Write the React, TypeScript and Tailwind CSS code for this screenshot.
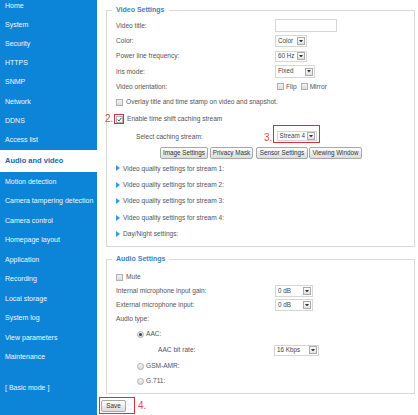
import { ReactNode } from 'react';

const menuTop = ['Home', 'System', 'Security', 'HTTPS', 'SNMP', 'Network', 'DDNS', 'Access list'];
const menuBottom = [
  'Motion detection',
  'Camera tampering detection',
  'Camera control',
  'Homepage layout',
  'Application',
  'Recording',
  'Local storage',
  'System log',
  'View parameters',
  'Maintenance'
];

function DropButton() {
  return (
    <span className="flex h-[8px] w-[8px] items-center justify-center border border-[#ababab] bg-gradient-to-b from-[#fbfbfb] to-[#e0e0e0]">
      <svg width="4" height="2.5" viewBox="0 0 4 2.5">
        <polygon points="0,0 4,0 2,2.5" fill="#333" />
      </svg>
    </span>
  );
}

function Select({ value, width, height = 'h-[12px]' }: { value: string; width: string; height?: string }) {
  return (
    <div className={`flex ${width} ${height} items-center justify-between border border-[#d6d6d6] bg-white pl-[2px] pr-[1px]`}>
      <span className="text-[6.3px] leading-none text-[#444]">{value}</span>
      <DropButton />
    </div>
  );
}

function Checkbox({ checked = false }: { checked?: boolean }) {
  return (
    <span
      className={`flex h-[7px] w-[7px] shrink-0 items-center justify-center border border-[#b0b0b0] ${
        checked ? 'bg-white' : 'bg-gradient-to-b from-[#f2f2f2] to-[#dcdcdc]'
      }`}
    >
      {checked && (
        <svg width="5" height="5" viewBox="0 0 5 5">
          <polyline points="0.6,2.6 2,4 4.4,0.8" fill="none" stroke="#2c4f8f" strokeWidth="1" />
        </svg>
      )}
    </span>
  );
}

function Radio({ checked = false }: { checked?: boolean }) {
  return (
    <span className="flex h-[7px] w-[7px] shrink-0 items-center justify-center rounded-full border border-[#b0b0b0] bg-gradient-to-b from-[#f4f4f4] to-[#dadada]">
      {checked && <span className="h-[3px] w-[3px] rounded-full bg-[#2f3f5a]" />}
    </span>
  );
}

function Row({ label, children, h = 'h-[15.3px]' }: { label: string; children?: ReactNode; h?: string }) {
  return (
    <div className={`flex ${h} items-center`}>
      <span className="w-[159px] shrink-0">{label}</span>
      {children}
    </div>
  );
}

function Arrow() {
  return (
    <svg width="4" height="6" viewBox="0 0 4 6" className="mr-[3px]">
      <polygon points="0,0 4,3 0,6" fill="#3a9bd6" />
    </svg>
  );
}

function Btn({ label, width, className = '' }: { label: string; width: string; className?: string }) {
  return (
    <span
      className={`flex h-[12px] ${width} items-center justify-center rounded-[2px] border border-[#a8a8a8] bg-gradient-to-b from-[#fdfdfd] to-[#dcdcdc] text-[6.3px] text-[#333] ${className}`}
    >
      {label}
    </span>
  );
}

export default function App() {
  return (
    <div className="flex h-[415px] w-[418px] overflow-hidden bg-white font-['Liberation_Sans',Arial,sans-serif]">
      <aside className="w-[97px] shrink-0 overflow-hidden bg-[#0c85d8]">
        <ul className="-mt-[3.7px] flex flex-col">
          {menuTop.map((item) => (
            <li key={item} className="flex h-[19.2px] items-center pl-[5px] text-[7px] text-[#f2f8fd]">
              {item}
            </li>
          ))}
          <li className="flex h-[22.5px] items-center bg-white pl-[5px] text-[7.5px] font-bold text-[#1c64b0]">
            Audio and video
          </li>
          {menuBottom.map((item) => (
            <li key={item} className="flex h-[19.5px] items-center pl-[5px] text-[7px] text-[#f2f8fd]">
              {item}
            </li>
          ))}
          <li className="mt-[11px] flex h-[19.5px] items-center pl-[5px] text-[7px] text-[#f2f8fd]">[ Basic mode ]</li>
        </ul>
      </aside>

      <main className="flex-1 pl-[9px] pr-[3px] text-[6.6px] text-[#555]">
        <fieldset className="mt-[5px] border border-[#d9d9d9] px-[9px] pb-[4px]">
          <legend className="-ml-[4px] px-[4px] text-[7px] font-bold leading-[10px] text-[#3c82c4]">Video Settings</legend>
          <div className="flex flex-col pt-[3px]">
            <Row label="Video title:">
              <span className="h-[13px] w-[62px] border border-[#d6d6d6] bg-white" />
            </Row>
            <Row label="Color:">
              <Select value="Color" width="w-[32px]" />
            </Row>
            <Row label="Power line frequency:">
              <Select value="60 Hz" width="w-[32px]" height="h-[11px]" />
            </Row>
            <Row label="Iris mode:">
              <Select value="Fixed" width="w-[40px]" height="h-[13px]" />
            </Row>
            <Row label="Video orientation:">
              <span className="ml-[2px] flex items-center">
                <Checkbox />
                <span className="ml-[2px]">Flip</span>
                <span className="ml-[4px]">
                  <Checkbox />
                </span>
                <span className="ml-[2px]">Mirror</span>
              </span>
            </Row>
            <div className="flex h-[15.3px] items-center">
              <Checkbox />
              <span className="ml-[3px]">Overlay title and time stamp on video and snapshot.</span>
            </div>

            <div className="-ml-[11px] flex h-[19px] items-center">
              <span className="w-[9px] text-[10px] leading-none text-[#d94c4c]">2.</span>
              <span className="flex h-[10px] w-[10px] items-center justify-center border-[1.5px] border-[#d0323c]">
                <Checkbox checked />
              </span>
              <span className="ml-[3px]">Enable time shift caching stream</span>
            </div>

            <div className="flex h-[16px] items-center">
              <span className="w-[148px] shrink-0 pl-[20px]">Select caching stream:</span>
              <span className="w-[9px] self-start pt-[4px] text-[10px] leading-none text-[#d94c4c]">3.</span>
              <span className="-mt-[4px] flex h-[18px] w-[47px] items-end justify-center self-start border-[1.5px] border-[#d0323c] pb-[1px]">
                <Select value="Stream 4" width="w-[40px]" height="h-[10px]" />
              </span>
            </div>

            <div className="flex h-[15.5px] items-center pl-[44px]">
              <Btn label="Image Settings" width="w-[48px]" />
              <Btn label="Privacy Mask" width="w-[43px]" className="ml-[2px]" />
              <Btn label="Sensor Settings" width="w-[52px]" className="ml-[3px]" />
              <Btn label="Viewing Window" width="w-[53px]" className="ml-[1px]" />
            </div>

            {[1, 2, 3, 4].map((n) => (
              <div key={n} className="flex h-[16.4px] items-center">
                <Arrow />
                <span>Video quality settings for stream {n}:</span>
              </div>
            ))}
            <div className="flex h-[16.4px] items-center">
              <Arrow />
              <span>Day/Night settings:</span>
            </div>
          </div>
        </fieldset>

        <fieldset className="mt-[7px] border border-[#d9d9d9] px-[9px] pb-[5px]">
          <legend className="-ml-[4px] px-[4px] text-[7px] font-bold leading-[10px] text-[#3c82c4]">Audio Settings</legend>
          <div className="flex flex-col pt-[6px]">
            <div className="flex h-[14px] items-center">
              <Checkbox />
              <span className="ml-[3px]">Mute</span>
            </div>
            <Row label="Internal microphone input gain:" h="h-[14px]">
              <Select value="0 dB" width="w-[38px]" />
            </Row>
            <Row label="External microphone input:" h="h-[14px]">
              <Select value="0 dB" width="w-[38px]" />
            </Row>
            <Row label="Audio type:" h="h-[14px]" />
            <div className="flex h-[16px] items-center pl-[21px]">
              <Radio checked />
              <span className="ml-[2px]">AAC:</span>
            </div>
            <div className="flex h-[16px] items-center">
              <span className="w-[158px] shrink-0 pl-[42px]">AAC bit rate:</span>
              <Select value="16 Kbps" width="w-[45px]" height="h-[11px]" />
            </div>
            <div className="flex h-[16px] items-center pl-[21px]">
              <Radio />
              <span className="ml-[2px]">GSM-AMR:</span>
            </div>
            <div className="flex h-[14px] items-center pl-[21px]">
              <Radio />
              <span className="ml-[2px]">G.711:</span>
            </div>
          </div>
        </fieldset>

        <div className="-ml-[7px] mt-[3px] flex items-center">
          <span className="flex h-[17px] w-[36px] items-center border-[1.5px] border-[#d0323c] pl-[1px]">
            <Btn label="Save" width="w-[25px]" />
          </span>
          <span className="ml-[3px] text-[10px] leading-none text-[#d94c4c]">4.</span>
        </div>
      </main>
    </div>
  );
}
